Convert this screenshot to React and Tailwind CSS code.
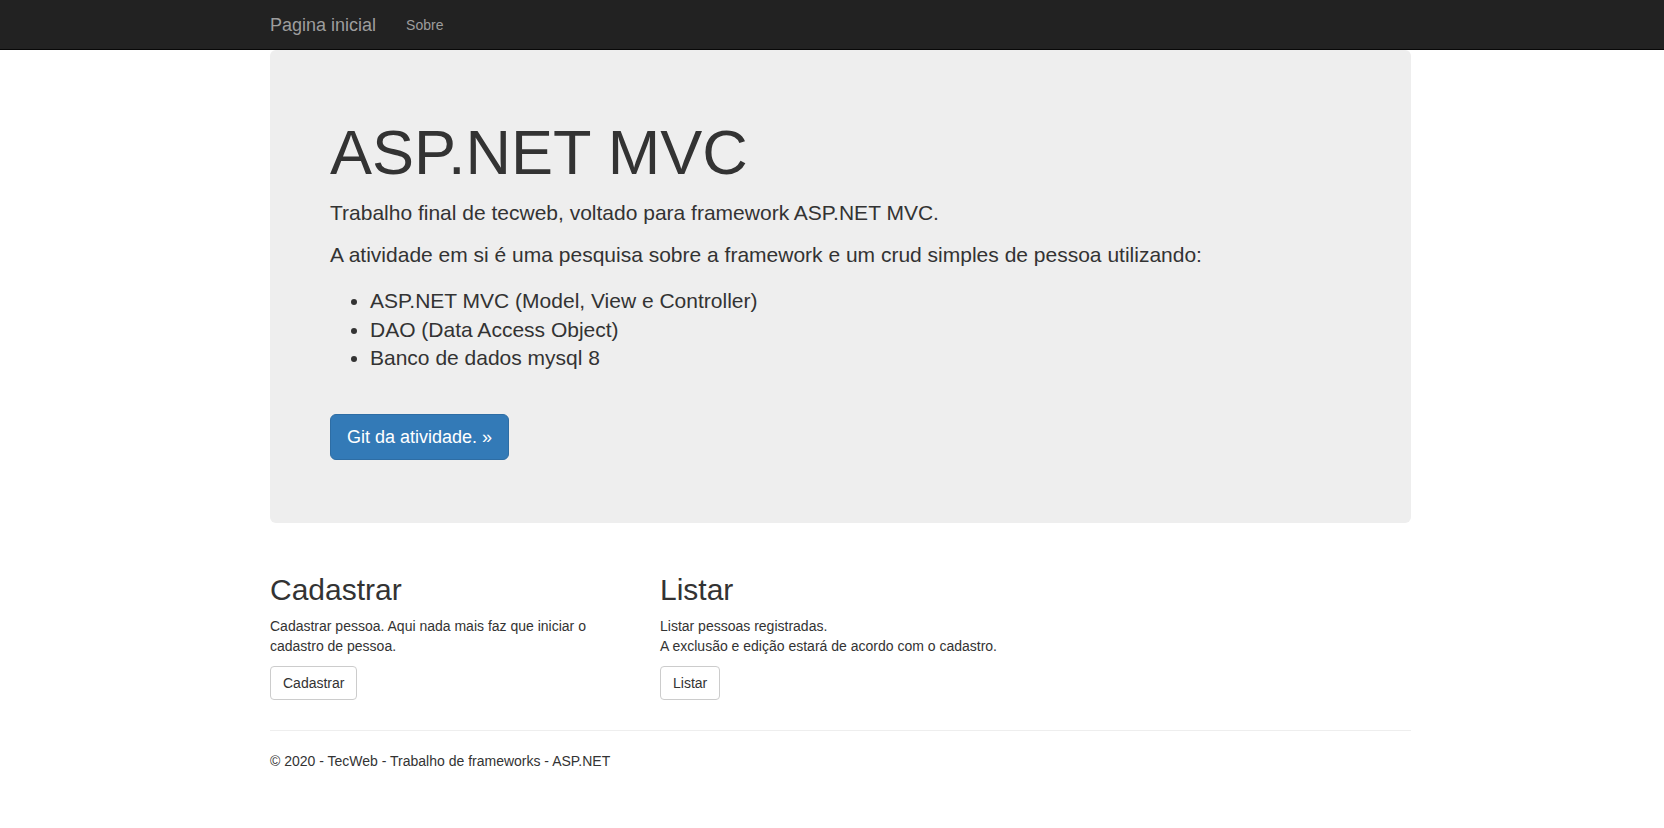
import React from 'react'

const COLUMNS = [
  {
    title: 'Cadastrar',
    lines: ['Cadastrar pessoa. Aqui nada mais faz que iniciar o cadastro de pessoa.'],
    action: 'Cadastrar',
  },
  {
    title: 'Listar',
    lines: ['Listar pessoas registradas.', 'A exclusão e edição estará de acordo com o cadastro.'],
    action: 'Listar',
  },
]

const STACK = [
  'ASP.NET MVC (Model, View e Controller)',
  'DAO (Data Access Object)',
  'Banco de dados mysql 8',
]

export default function App() {
  return (
    <div className="min-h-screen bg-white text-[#333] font-['Liberation_Sans',Arial,sans-serif] text-[14px] leading-[20px]">

      {/* Navbar */}
      <nav className="h-[50px] bg-[#222] border-b border-[#080808]">
        <div className="ml-[255px] w-[1171px] flex">
          <a href="#" className="px-[15px] pt-[15px] text-[18px] leading-[20px] text-[#9d9d9d]">Pagina inicial</a>
          <a href="#" className="px-[15px] pt-[15px] text-[14px] leading-[20px] text-[#9d9d9d]">Sobre</a>
        </div>
      </nav>

      <div className="ml-[255px] w-[1171px] px-[15px]">

        {/* Jumbotron */}
        <div className="rounded-[6px] bg-[#eee] px-[60px] pt-[48px] pb-[48px]">
          <h1 className="mt-[20px] mb-[11px] text-[63px] leading-[1.1] font-normal">ASP.NET MVC</h1>
          <p className="text-[21px] leading-[30px] mb-[12px]">Trabalho final de tecweb, voltado para framework ASP.NET MVC.</p>
          <p className="text-[21px] leading-[30px] mb-[17px]">A atividade em si é uma pesquisa sobre a framework e um crud simples de pessoa utilizando:</p>
          <ul className="list-disc pl-[40px] text-[21px] leading-[28.6px]">
            {STACK.map(item => <li key={item}>{item}</li>)}
          </ul>
          <div className="flex mt-[41px] mb-[15px]">
            <a href="#" className="px-[16px] py-[10px] text-[18px] leading-[24px] text-white bg-[#337ab7] border border-[#2e6da4] rounded-[6px]">
              Git da atividade. »
            </a>
          </div>
        </div>

        {/* Columns */}
        <div className="mt-[30px] -mx-[15px] flex">
          {COLUMNS.map(col => (
            <div key={col.title} className="w-[390px] px-[15px]">
              <h2 className="mt-[20px] mb-[10px] text-[30px] leading-[1.1] font-normal">{col.title}</h2>
              <p className="mb-[10px]">
                {col.lines.map((l, i) => (
                  <React.Fragment key={i}>{i > 0 && <br />}{l}</React.Fragment>
                ))}
              </p>
              <div className="flex mb-[10px]">
                <a href="#" className="px-[12px] py-[6px] bg-white border border-[#ccc] rounded-[4px] text-[#333]">{col.action}</a>
              </div>
            </div>
          ))}
        </div>

        <hr className="mt-[20px] mb-[20px] border-0 border-t border-[#eee]" />
        <footer>
          <p className="mb-[10px]">© 2020 - TecWeb - Trabalho de frameworks - ASP.NET</p>
        </footer>
      </div>
    </div>
  )
}
